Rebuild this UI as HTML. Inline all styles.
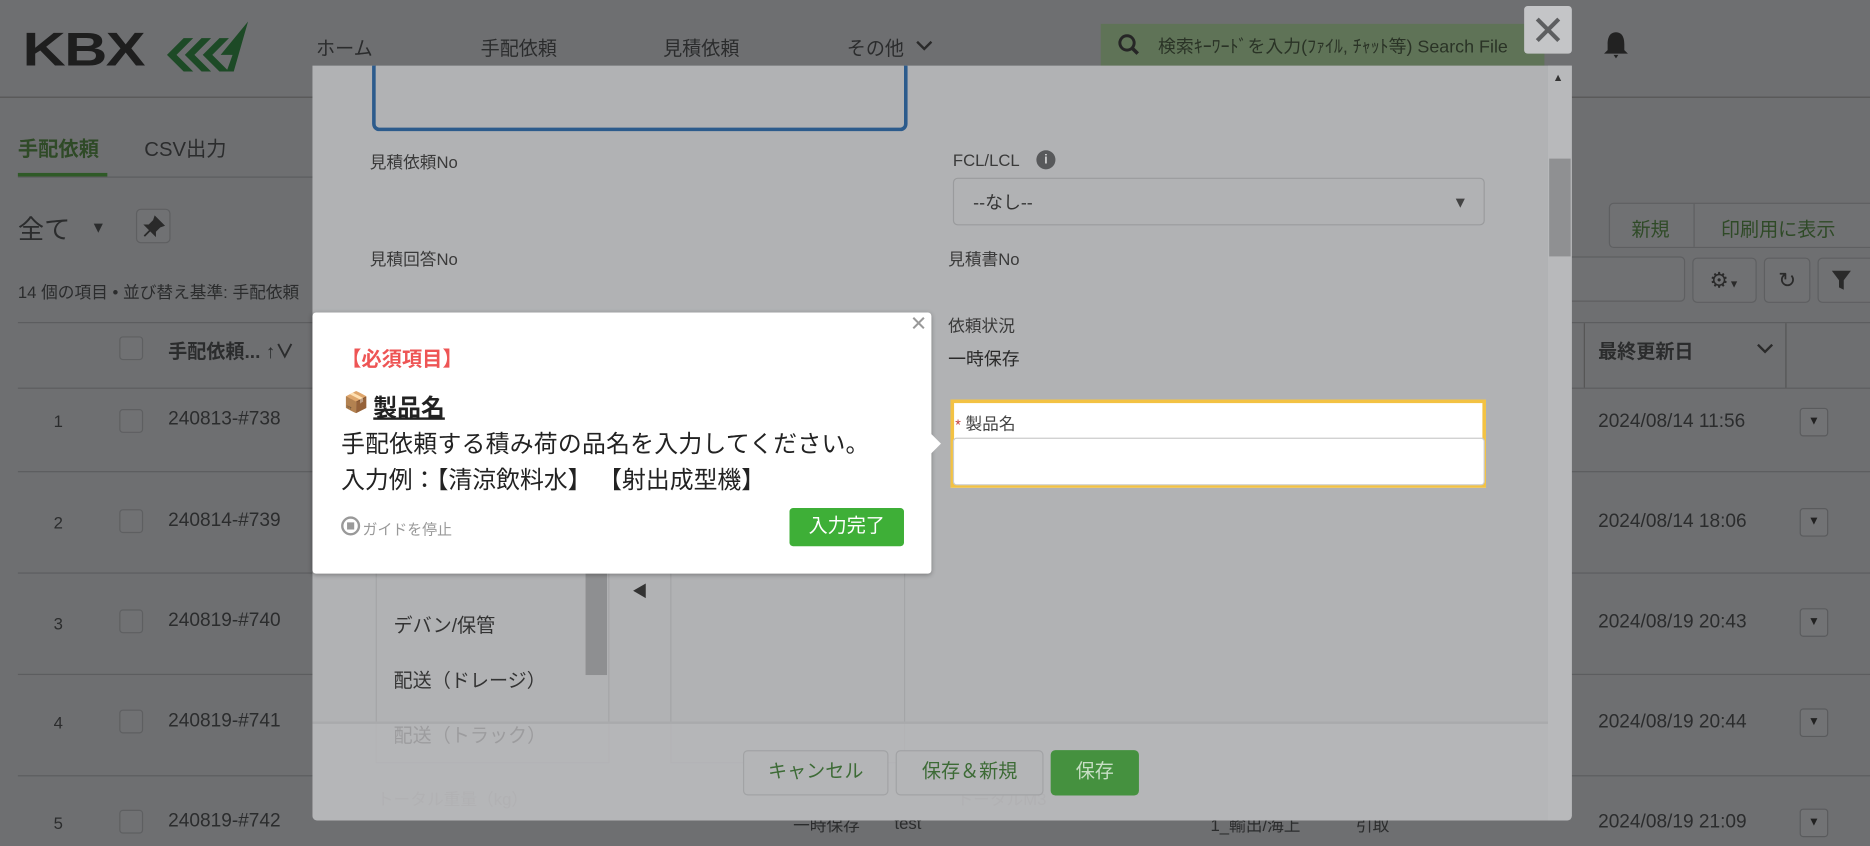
<!DOCTYPE html>
<html><head><meta charset="utf-8"><style>
*{box-sizing:border-box;margin:0;padding:0}
html,body{width:1870px;height:846px;overflow:hidden;background:#6e6f71}
#w{position:absolute;left:0;top:0;width:1568px;height:709px;transform:scale(1.19260);transform-origin:0 0;font-family:"Liberation Sans","Noto Sans CJK JP",sans-serif;color:#2a2a2a}
.a{position:absolute;white-space:nowrap}
.d{color:#2b2c2d}
.hl{position:absolute;height:1px;background:#5c5d5f}
.cb{position:absolute;width:20px;height:20px;border:1px solid #5e5f61;border-radius:3px;background:#707173}
.dd{position:absolute;width:24px;height:24px;border:1px solid #5a5b5d;border-radius:3px;background:#727375;font-size:10px;text-align:center;line-height:22px;color:#222}
.btn{position:absolute;border:1px solid #5e5f61;border-radius:4px;background:#707173}
</style></head><body><div id="w">
<!-- header -->
<div class="hl" style="left:0;top:81px;width:1568px;background:#555"></div>
<div class="a" style="left:19px;top:22px;font:900 40px/40px 'Liberation Sans',sans-serif;color:#1e1e1e;letter-spacing:-1px;transform:scaleX(1.25);transform-origin:0 0">KBX</div>
<svg class="a" style="left:128px;top:16px" width="82" height="46"><path d="M12 30 L26 16 L34 16 L20 30 L34 44 L26 44Z M27 30 L41 16 L49 16 L35 30 L49 44 L41 44Z M42 30 L56 16 L64 16 L50 30 L64 44 L56 44Z M57 30 L80 2 L68 44 L62 44 L67 30Z" fill="#1d4a26"/></svg>
<div class="a d" style="left:265px;top:27px;font-size:16px">ホーム</div>
<div class="a d" style="left:403px;top:27px;font-size:16px">手配依頼</div>
<div class="a d" style="left:556px;top:27px;font-size:16px">見積依頼</div>
<div class="a d" style="left:710px;top:27px;font-size:16px">その他</div>
<svg class="a" style="left:767px;top:32px" width="16" height="12"><path d="M2 3 L8 9 L14 3" stroke="#2a2a2a" stroke-width="2" fill="none"/></svg>
<div class="a" style="left:923px;top:20px;width:372px;height:36px;background:#5f7357"></div>
<svg class="a" style="left:937px;top:28px" width="20" height="20"><circle cx="8" cy="8" r="6" stroke="#262626" stroke-width="2.5" fill="none"/><path d="M12 12 L17 17" stroke="#262626" stroke-width="3"/></svg>
<div class="a" style="left:971px;top:28px;font-size:15px;color:#2a3326">検索ｷｰﾜｰﾄﾞを入力(ﾌｧｲﾙ, ﾁｬｯﾄ等) Search File</div>
<div class="a" style="left:1278px;top:5px;width:40px;height:40px;background:#c4c5c7;border-radius:3px"></div>
<svg class="a" style="left:1286px;top:13px" width="24" height="24"><path d="M3 3 L21 21 M21 3 L3 21" stroke="#5d5e60" stroke-width="3.5"/></svg>
<svg class="a" style="left:1343px;top:25px" width="24" height="26"><path d="M12 2 C6 2 5 8 5 12 L5 17 L2 20 L22 20 L19 17 L19 12 C19 8 18 2 12 2Z M10 21 L14 21 L12 24Z" fill="#222"/></svg>
<!-- left bg -->
<div class="a" style="left:15px;top:111px;font-size:17px;color:#2f4a27;font-weight:bold">手配依頼</div>
<div class="a" style="left:15px;top:145px;width:75px;height:3px;background:#2f5a27"></div>
<div class="a d" style="left:121px;top:111px;font-size:17px">CSV出力</div>
<div class="hl" style="left:15px;top:148px;width:250px"></div>
<div class="a d" style="left:15px;top:175px;font-size:22px">全て</div>
<div class="a d" style="left:76px;top:183px;font-size:13px">▼</div>
<div class="btn" style="left:114px;top:175px;width:29px;height:29px"></div>
<svg class="a" style="left:119px;top:180px" width="20" height="20"><path d="M11 2 L18 9 L15 10 L11 14 L11 17 L3 9 L6 9 L10 5Z M7 13 L2 18" fill="#2a2a2a" stroke="#2a2a2a" stroke-width="1.5"/></svg>
<div class="a d" style="left:15px;top:235px;font-size:14px">14 個の項目 • 並び替え基準: 手配依頼</div>
<div class="hl" style="left:15px;top:270px;width:1553px"></div>
<div class="hl" style="left:15px;top:325px;width:1553px"></div>
<div class="cb" style="left:100px;top:282px"></div>
<div class="a d" style="left:141px;top:281px;font-size:16px;font-weight:bold">手配依頼... ↑∨</div>
<div class="a d" style="left:1340px;top:281px;font-size:16px;font-weight:bold">最終更新日</div>
<svg class="a" style="left:1472px;top:286px" width="16" height="12"><path d="M2 3 L8 9 L14 3" stroke="#2a2a2a" stroke-width="2" fill="none"/></svg>
<div class="a" style="left:1328px;top:271px;width:1px;height:54px;background:#555"></div>
<div class="a" style="left:1497px;top:271px;width:1px;height:54px;background:#555"></div>
<div class="hl" style="left:15px;top:395px;width:1553px"></div>
<div class="hl" style="left:15px;top:480px;width:1553px"></div>
<div class="hl" style="left:15px;top:565px;width:1553px"></div>
<div class="hl" style="left:15px;top:650px;width:1553px"></div>
<div class="a d" style="left:45px;top:345px;font-size:14px">1</div><div class="cb" style="left:100px;top:343px"></div><div class="a d" style="left:141px;top:343px;font-size:16px">240813-#738</div>
<div class="a d" style="left:45px;top:430px;font-size:14px">2</div><div class="cb" style="left:100px;top:427px"></div><div class="a d" style="left:141px;top:428px;font-size:16px">240814-#739</div>
<div class="a d" style="left:45px;top:515px;font-size:14px">3</div><div class="cb" style="left:100px;top:511px"></div><div class="a d" style="left:141px;top:512px;font-size:16px">240819-#740</div>
<div class="a d" style="left:45px;top:598px;font-size:14px">4</div><div class="cb" style="left:100px;top:595px"></div><div class="a d" style="left:141px;top:596px;font-size:16px">240819-#741</div>
<div class="a d" style="left:45px;top:682px;font-size:14px">5</div><div class="cb" style="left:100px;top:679px"></div><div class="a d" style="left:141px;top:680px;font-size:16px">240819-#742</div>
<div class="a d" style="left:1340px;top:345px;font-size:16px">2024/08/14 11:56</div><div class="dd" style="left:1509px;top:342px">▼</div>
<div class="a d" style="left:1340px;top:429px;font-size:16px">2024/08/14 18:06</div><div class="dd" style="left:1509px;top:426px">▼</div>
<div class="a d" style="left:1340px;top:513px;font-size:16px">2024/08/19 20:43</div><div class="dd" style="left:1509px;top:510px">▼</div>
<div class="a d" style="left:1340px;top:597px;font-size:16px">2024/08/19 20:44</div><div class="dd" style="left:1509px;top:594px">▼</div>
<div class="a d" style="left:1340px;top:681px;font-size:16px">2024/08/19 21:09</div><div class="dd" style="left:1509px;top:678px">▼</div>
<div class="btn" style="left:1349px;top:170px;width:225px;height:38px"></div>
<div class="a" style="left:1420px;top:171px;width:1px;height:36px;background:#5e5f61"></div>
<div class="a" style="left:1368px;top:179px;font-size:16px;color:#2f4a27">新規</div>
<div class="a" style="left:1443px;top:179px;font-size:16px;color:#2f4a27">印刷用に表示</div>
<div class="btn" style="left:1300px;top:215px;width:113px;height:38px"></div>
<div class="btn" style="left:1419px;top:216px;width:54px;height:38px;text-align:center;line-height:36px;font-size:18px;color:#2a2a2a">⚙<span style="font-size:9px">▼</span></div>
<div class="btn" style="left:1479px;top:216px;width:39px;height:38px;text-align:center;line-height:36px;font-size:18px;color:#2a2a2a">↻</div>
<div class="btn" style="left:1524px;top:216px;width:50px;height:38px"></div>
<svg class="a" style="left:1535px;top:226px" width="18" height="18"><path d="M1 1 L17 1 L11 9 L11 17 L7 15 L7 9Z" fill="#2a2a2a"/></svg>
<div class="a d" style="left:665px;top:682px;font-size:14px">一時保存</div><div class="a d" style="left:750px;top:682px;font-size:14px">test</div>
<div class="a d" style="left:1015px;top:682px;font-size:14px">1_輸出/海上</div><div class="a d" style="left:1137px;top:682px;font-size:14px">引取</div>
<!-- modal -->
<div class="a" style="left:262px;top:55px;width:1056px;height:633px;background:#b1b2b4;border-radius:0 0 4px 4px;overflow:hidden">
 <div class="a" style="left:1036px;top:0;width:20px;height:633px;background:#b8b9bb"></div>
 <div class="a" style="left:1037px;top:78px;width:18px;height:82px;background:#8f9092"></div>
 <div class="a" style="left:1040px;top:5px;font-size:9px;color:#333">▲</div>
 <div class="a" style="left:50px;top:-5px;width:449px;height:60px;border:3px solid #2c5b8c;border-radius:6px"></div>
 <div class="a" style="left:48px;top:71px;font-size:14px;color:#3a3a3a">見積依頼No</div>
 <div class="a" style="left:537px;top:71px;font-size:14px;color:#3a3a3a">FCL/LCL</div>
 <div class="a" style="left:607px;top:71px;width:16px;height:16px;border-radius:50%;background:#58595b;color:#ccc;font-size:11px;text-align:center;line-height:16px;font-weight:bold">i</div>
 <div class="a" style="left:537px;top:94px;width:446px;height:40px;border:1px solid #9a9b9d;border-radius:4px;background:#b1b2b4"></div>
 <div class="a" style="left:554px;top:104px;font-size:15px;color:#333">--なし--</div>
 <div class="a" style="left:956px;top:107px;font-size:13px;color:#444">▼</div>
 <div class="a" style="left:48px;top:152px;font-size:14px;color:#3a3a3a">見積回答No</div>
 <div class="a" style="left:533px;top:152px;font-size:14px;color:#3a3a3a">見積書No</div>
 <div class="a" style="left:533px;top:208px;font-size:14px;color:#3a3a3a">依頼状況</div>
 <div class="a" style="left:533px;top:235px;font-size:15px;color:#2a2a2a">一時保存</div>
 <div class="a" style="left:535px;top:280px;width:449px;height:74px;border:3px solid #f3c243;background:#fff"></div>
 <div class="a" style="left:539px;top:290px;font-size:14px;color:#444"><span style="color:#c23934;font-size:12px">*</span> 製品名</div>
 <div class="a" style="left:537px;top:312px;width:446px;height:40px;border:1px solid #ccc;border-radius:3px;background:#fff"></div>
 <div class="a" style="left:53px;top:420px;width:196px;height:165px;border:1px solid #a4a5a7;background:#b1b2b4"></div>
 <div class="a" style="left:229px;top:421px;width:18px;height:90px;background:#8e8f91"></div>
 <div class="a" style="left:68px;top:456px;font-size:16px;color:#333">デバン/保管</div>
 <div class="a" style="left:68px;top:502px;font-size:16px;color:#333">配送（ドレージ）</div>
 <div class="a" style="left:68px;top:548px;font-size:16px;color:#333">配送（トラック）</div>
 <div class="a" style="left:268px;top:430px;font-size:13px;color:#333">◀</div>
 <div class="a" style="left:300px;top:420px;width:197px;height:165px;border:1px solid #a4a5a7"></div>
 <div class="a" style="left:54px;top:605px;font-size:14px;color:#999">トータル重量（kg）</div>
 <div class="a" style="left:540px;top:605px;font-size:14px;color:#999">トータルM3</div>
 <div class="a" style="left:0;top:550px;width:1036px;height:83px;background:rgba(182,183,185,0.8);border-top:2px solid #a9aaac"></div>
 <div class="a" style="left:361px;top:574px;width:122px;height:38px;border:1px solid #a2a3a5;border-radius:4px;background:#b4b5b7;color:#3d6b36;font-size:16px;text-align:center;line-height:36px">キャンセル</div>
 <div class="a" style="left:489px;top:574px;width:124px;height:38px;border:1px solid #a2a3a5;border-radius:4px;background:#b4b5b7;color:#3d6b36;font-size:16px;text-align:center;line-height:36px">保存＆新規</div>
 <div class="a" style="left:619px;top:574px;width:74px;height:38px;border-radius:4px;background:#45913f;color:#c7dec4;font-size:16px;text-align:center;line-height:38px">保存</div>
</div>
<!-- tooltip -->
<div class="a" style="left:262px;top:262px;width:519px;height:219px;background:#fff;border-radius:3px;box-shadow:0 1px 4px rgba(0,0,0,.3)">
 <div class="a" style="left:501px;top:0px;font-size:17px;color:#999">✕</div>
 <div class="a" style="left:24px;top:25px;font-size:17px;font-weight:bold;color:#ee5555">【必須項目】</div>
 <div class="a" style="left:26px;top:66px;font-size:17px">📦</div>
 <div class="a" style="left:51px;top:64px;font-size:20px;font-weight:bold;text-decoration:underline;color:#222">製品名</div>
 <div class="a" style="left:24px;top:94px;font-size:20px;color:#222;letter-spacing:0.2px">手配依頼する積み荷の品名を入力してください。</div>
 <div class="a" style="left:24px;top:124px;font-size:20px;color:#222">入力例：【清涼飲料水】 【射出成型機】</div>
 <div class="a" style="left:24px;top:171px;width:16px;height:16px;border:2px solid #999;border-radius:50%"><div style="margin:3px;width:6px;height:6px;background:#999"></div></div>
 <div class="a" style="left:42px;top:171px;font-size:12.5px;color:#999">ガイドを停止</div>
 <div class="a" style="left:400px;top:164px;width:96px;height:32px;background:#3eaf37;border-radius:3px;color:#fff;font-size:16px;text-align:center;line-height:32px">入力完了</div>
 <div class="a" style="left:517px;top:100px;width:0;height:0;border-top:10px solid transparent;border-bottom:10px solid transparent;border-left:10px solid #fff"></div>
</div>
</div></body></html>
